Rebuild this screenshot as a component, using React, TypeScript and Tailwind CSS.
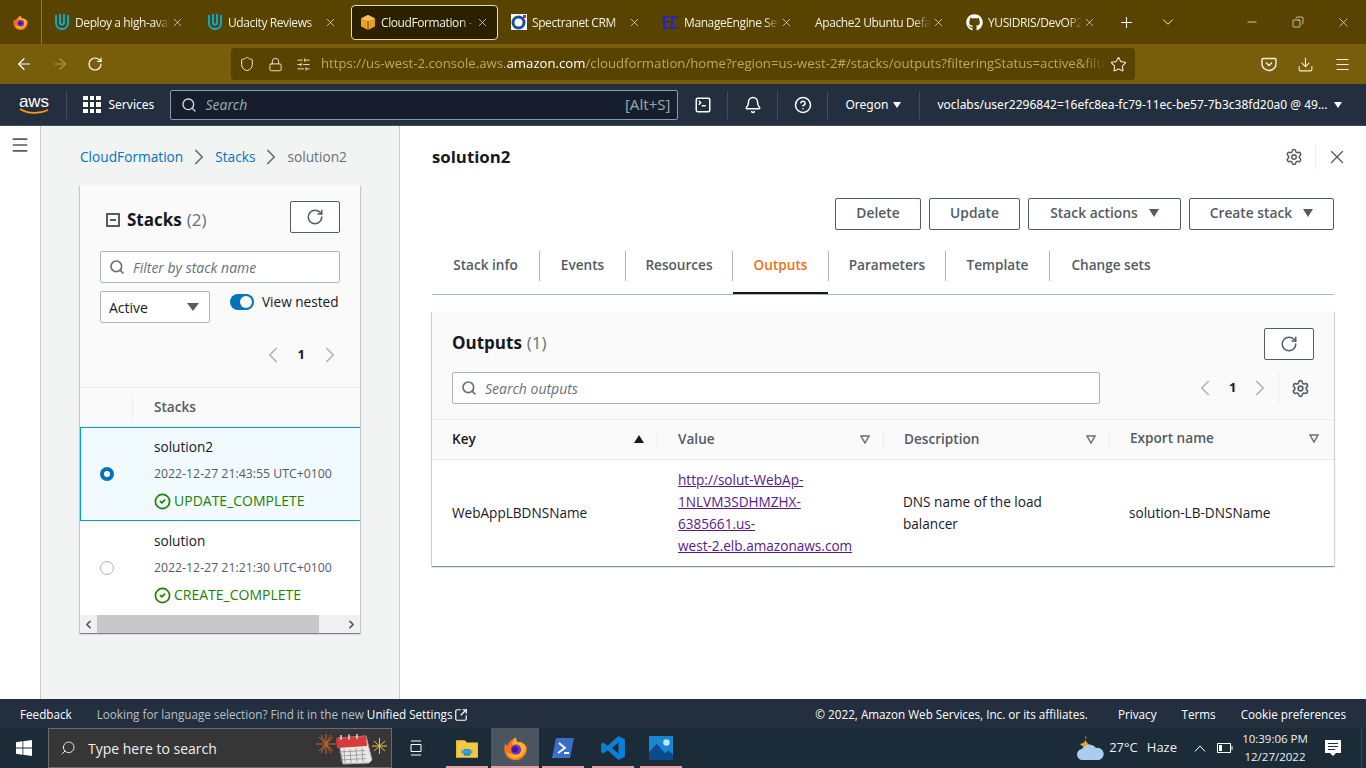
import { RotateCw, Search, Settings, X, ChevronLeft, ChevronRight, ChevronDown, Plus, ArrowLeft, ArrowRight, Shield, Lock, SlidersHorizontal, Star, Download, Menu, Bell, CircleHelp, SquareTerminal, CircleCheck, Minus, SquareArrowOutUpRight, Copy } from "lucide-react";
import { FaGithub } from "react-icons/fa";

function Firefox({ size = 18 }: { size?: number }) {
  return (
    <svg width={size} height={size} viewBox="0 0 24 24">
      <path d="M12 2c1 2 .5 3.5 2 4.500 3-1 7 2 8 5 .5 6-4 11-10 11S2 18 2 12c0-2 .5-3.500 1.500-5 0 1.500.5 2 1 2.500C6 6 9 4 12 2z" fill="#f4701f" />
      <path d="M12 2c1 2 .5 3.500 2 4.500 3-1 6.500 1.500 7.500 4.500-.5 5-4 9-9.500 10C8 21 5 19 4 15c3 3 9 3 11-1 .5-2-1-4-3-4.500-2-.2-3-1-3-2 1-2 2-3.500 3-5.500z" fill="#fbb120" />
      <circle cx="12.500" cy="13" r="4.500" fill="#7b2ccf" />
      <circle cx="11.500" cy="13" r="2.500" fill="#3a1d8a" />
    </svg>
  );
}

function Udacity() {
  return (
    <svg width="16" height="18" viewBox="0 0 16 18" fill="none" stroke="#02b3e4" strokeWidth="1.800">
      <path d="M2 2v8c0 3.500 2.500 6 6 6s6-2.500 6-6V2" />
      <path d="M6 1v9c0 2 4 2 4 0V1" />
    </svg>
  );
}

function Tab({ label, icon, active, space }: { label: string; icon?: React.ReactNode; active?: boolean; space: string }) {
  return (
    <div className={`w-[147px] shrink-0 ${space}`}>
      <div className={`flex items-center h-[35px] ${active ? "bg-[#2b2000] border border-[#e8dcae] rounded-[4px] pl-[8px]" : "pl-[9px]"}`}>
        {icon}
        <span className={`text-[12px] tracking-[-0.4px] pt-[1px] text-[#f3f0e4] whitespace-nowrap overflow-hidden w-0 flex-1 [mask-image:linear-gradient(90deg,#000_85%,transparent)] ${icon ? "ml-[5px]" : ""}`}>{label}</span>
        <X size={13} strokeWidth={1.300} className="text-[#f3f0e4] shrink-0 mr-[8px] ml-[1px]" />
      </div>
    </div>
  );
}

function TabBar() {
  return (
    <div className="h-[44px] bg-[#584300] flex items-center shrink-0">
      <div className="w-[42px] h-[44px] border-r border-[#8a7a40] flex items-center justify-center shrink-0">
        <Firefox size={17} />
      </div>
      <div className="flex items-center pl-[3px]">
        <Tab space="mr-[6px]" label="Deploy a high-availability" icon={<Udacity />} />
        <Tab space="mr-[6px]" label="Udacity Reviews" icon={<Udacity />} />
        <Tab space="mr-[4px]" active label="CloudFormation - Stack" icon={
          <svg width="16" height="17" viewBox="0 0 16 17"><path d="M8 1l7 3.500v8L8 16l-7-3.500v-8z" fill="#e8a020" /><path d="M8 1l7 3.500L8 7 1 4.500z" fill="#f4c060" /><path d="M8 7v9" stroke="#7a5000" strokeWidth="1" /></svg>
        } />
        <Tab space="mr-[5px]" label="Spectranet CRM" icon={
          <svg width="16" height="16" viewBox="0 0 16 16"><rect width="16" height="16" fill="#fff" /><circle cx="7.500" cy="8.500" r="5.500" fill="none" stroke="#1c4f9c" strokeWidth="3" /><rect x="12" y="1" width="3" height="3" fill="#e02020" /></svg>
        } />
        <Tab space="mr-[5px]" label="ManageEngine ServiceDesk" icon={
          <svg width="16" height="15" viewBox="0 0 16 15" fill="none" stroke="#1a1aff" strokeWidth="1.600"><path d="M7 2H1v11h6M1 7h5M15 2H9v11h6M9 2v11" /></svg>
        } />
        <Tab space="mr-[4px]" label="Apache2 Ubuntu Default Page" />
        <Tab space="" label="YUSIDRIS/DevOP2-Project" icon={<FaGithub size={17} className="text-white" />} />
      </div>
      <Plus size={17} strokeWidth={1.500} className="text-white ml-[14px]" />
      <ChevronDown size={18} strokeWidth={1.300} className="text-[#f3f0e4] ml-[24px]" />
      <div className="flex-1" />
      <Minus size={14} strokeWidth={1.200} className="text-white mr-[33px]" />
      <Copy size={12} strokeWidth={1.300} className="text-white mr-[32px] -scale-x-100" />
      <X size={15} strokeWidth={1} className="text-white mr-[15px]" />
    </div>
  );
}

function AddressBar() {
  return (
    <div className="h-[40px] bg-[#785e0a] flex items-center shrink-0">
      <ArrowLeft size={18} strokeWidth={1.600} className="text-white ml-[15px]" />
      <ArrowRight size={18} strokeWidth={1.600} className="text-[#a8965a] ml-[18px]" />
      <RotateCw size={16} strokeWidth={1.800} className="text-white ml-[18px]" />
      <div className="ml-[128px] w-[904px] h-[32px] bg-[#584300] rounded-[4px] flex items-center">
        <Shield size={16} strokeWidth={1.500} className="text-[#f0ead0] ml-[8px]" />
        <Lock size={15} strokeWidth={1.500} className="text-[#f0ead0] ml-[13px]" />
        <SlidersHorizontal size={15} strokeWidth={1.500} className="text-[#f0ead0] ml-[13px]" />
        <div className="ml-[10px] w-[785px] shrink-0 overflow-hidden whitespace-nowrap text-[13.200px] text-[#baa86e] [mask-image:linear-gradient(90deg,#000_97%,transparent)]">
          https://us-west-2.console.aws.<span className="text-white">amazon.com</span>/cloudformation/home?region=us-west-2#/stacks/outputs?filteringStatus=active&amp;filteringText=
        </div>
        <Star size={17} strokeWidth={1.500} className="text-[#f3f0e4] ml-[4px]" />
      </div>
      <div className="flex-1" />
      <svg width="16" height="16" viewBox="0 0 16 16" fill="none" stroke="#f3f0e4" strokeWidth="1.400" className="mr-[20px]"><path d="M2 2.500h12a1 1 0 0 1 1 1V8a7 6.500 0 0 1-14 0V3.500a1 1 0 0 1 1-1z" /><path d="M5 6.500l3 3 3-3" /></svg>
      <Download size={17} strokeWidth={1.500} className="text-[#f3f0e4] mr-[20px]" />
      <Menu size={17} strokeWidth={1.500} className="text-[#f3f0e4] mr-[15px]" />
    </div>
  );
}

function AwsNav() {
  const divider = "w-px h-[28px] bg-[#414d5c] shrink-0";
  return (
    <div className="h-[42px] bg-[#232f3e] flex items-center shrink-0 border-b border-[#414d5c] font-['Noto_Sans',sans-serif]">
      <div className="w-[66px] flex flex-col items-center shrink-0 pl-[2px]">
        <span className="text-[17px] leading-[13px] text-white font-['Liberation_Sans',sans-serif]">aws</span>
        <svg width="30" height="7" viewBox="0 0 30 7" fill="none"><path d="M1 1c8 5 20 5 28 1" stroke="#f90" strokeWidth="1.600" /></svg>
      </div>
      <div className={divider} />
      <div className="grid grid-cols-3 gap-[2px] ml-[16px] shrink-0">
        {Array.from({ length: 9 }).map((_, i) => (
          <div key={i} className="w-[4.500px] h-[4.500px] bg-white" />
        ))}
      </div>
      <span className="text-[12px] text-white ml-[8px] w-[25px]">Services</span>
      <div className="ml-[36px] w-[508px] h-[30px] bg-[#161e2d] border border-[#8d9ba8] rounded-[2px] flex items-center shrink-0">
        <Search size={16} strokeWidth={2} className="text-[#d5dbdb] ml-[10px]" />
        <span className="text-[14px] italic text-[#95a5a6] ml-[9px]">Search</span>
        <span className="text-[15px] text-[#95a5a6] ml-auto mr-[6px]">[Alt+S]</span>
      </div>
      <SquareTerminal size={18} strokeWidth={2} className="text-white ml-[16px]" />
      <div className={`${divider} ml-[15px]`} />
      <Bell size={18} strokeWidth={2} className="text-white ml-[16px]" />
      <div className={`${divider} ml-[15px]`} />
      <CircleHelp size={18} strokeWidth={2} className="text-white ml-[16px]" />
      <div className={`${divider} ml-[15px]`} />
      <span className="text-[12px] text-white ml-[18px]">Oregon</span>
      <span className="w-0 h-0 border-l-[4px] border-r-[4px] border-t-[6px] border-l-transparent border-r-transparent border-t-white ml-[5px]" />
      <div className={`${divider} ml-[18px]`} />
      <span className="text-[12px] text-white ml-[17px] whitespace-nowrap">voclabs/user2296842=16efc8ea-fc79-11ec-be57-7b3c38fd20a0 @ 49...</span>
      <span className="w-0 h-0 border-l-[4px] border-r-[4px] border-t-[6px] border-l-transparent border-r-transparent border-t-white ml-[6px]" />
    </div>
  );
}

function StackRow({ name, time, status, selected }: { name: string; time: string; status: string; selected?: boolean }) {
  return (
    <div className={`flex h-[94px] ${selected ? "bg-[#f1faff] border border-[#00a1c9] border-r-0" : "bg-white pl-px"}`}>
      <div className="w-[52px] flex items-center justify-center shrink-0">
        {selected ? (
          <div className="w-[14px] h-[14px] rounded-full border-[4px] border-[#0073bb] bg-white" />
        ) : (
          <div className="w-[14px] h-[14px] rounded-full border border-[#aab7b8] bg-white" />
        )}
      </div>
      <div className={`pl-[21px] ${selected ? "pt-[9px]" : "pt-[10px]"}`}>
        <div className="text-[13.600px] leading-[20px] text-[#16191f]">{name}</div>
        <div className="text-[12.300px] leading-[18px] text-[#545b64] mt-[8px] whitespace-nowrap">{time}</div>
        <div className="flex items-center text-[14px] leading-[20px] text-[#1d8102] mt-[8px]">
          <CircleCheck size={17} strokeWidth={2.400} className="mr-[3px]" />
          {status}
        </div>
      </div>
    </div>
  );
}

function StacksPanel() {
  return (
    <div className="w-[280px] h-[448px] mt-[20px] ml-[39px] bg-[#fafafa] shadow-[0_1px_1px_0_rgba(0,28,36,0.3),1px_1px_1px_0_rgba(0,28,36,0.15),-1px_1px_1px_0_rgba(0,28,36,0.15)] flex flex-col overflow-hidden">
      <div className="h-[202px] relative shrink-0 px-[20px]">
        <div className="flex items-center justify-between pt-[16px]">
          <div className="flex items-center pl-[6px] pt-[6px]">
            <div className="w-[14px] h-[14px] border-2 border-[#545b64] flex items-center justify-center mr-[7px]">
              <div className="w-[6px] h-[2px] bg-[#545b64]" />
            </div>
            <span className="text-[17px] leading-[24px] font-bold text-[#16191f]">Stacks</span>
            <span className="text-[17px] leading-[24px] text-[#687078] ml-[5px]">(2)</span>
          </div>
          <div className="w-[50px] h-[32px] bg-white border border-[#545b64] rounded-[2px] flex items-center justify-center">
            <RotateCw size={18} strokeWidth={2} className="text-[#545b64]" />
          </div>
        </div>
        <div className="h-[32px] mt-[18px] bg-white border border-[#aab7b8] rounded-[2px] flex items-center">
          <Search size={16} strokeWidth={2.500} className="text-[#687078] ml-[8px]" />
          <span className="text-[14px] italic text-[#687078] ml-[8px]">Filter by stack name</span>
        </div>
        <div className="flex mt-[8px]">
          <div className="w-[110px] h-[32px] bg-white border border-[#aab7b8] rounded-[2px] flex items-center justify-between px-[8px]">
            <span className="text-[14px] text-[#16191f]">Active</span>
            <span className="w-0 h-0 border-l-[6px] border-r-[6px] border-t-[8px] border-l-transparent border-r-transparent border-t-[#545b64] mr-[2px]" />
          </div>
          <div className="flex items-start pt-[1px] ml-[20px]">
            <div className="w-[24px] h-[16px] mt-[2px] rounded-full bg-[#0073bb] relative">
              <div className="absolute right-[2px] top-[2px] w-[12px] h-[12px] rounded-full bg-white" />
            </div>
            <span className="text-[13.600px] leading-[20px] text-[#16191f] ml-[8px] whitespace-nowrap">View nested</span>
          </div>
        </div>
        <div className="flex items-center justify-end mt-[19px] -mr-[3px]">
          <ChevronLeft size={26} strokeWidth={1.600} className="text-[#aab7b8]" />
          <span className="text-[13px] font-bold text-[#16191f] mx-[12px]">1</span>
          <ChevronRight size={26} strokeWidth={1.600} className="text-[#aab7b8]" />
        </div>
      </div>
      <div className="h-[40px] border-t border-[#eaeded] border-b flex items-center shrink-0">
        <div className="w-[53px] h-[20px] border-r border-[#eaeded] shrink-0" />
        <span className="text-[13.600px] font-semibold text-[#545b64] ml-[21px]">Stacks</span>
      </div>
      <StackRow selected name="solution2" time="2022-12-27 21:43:55 UTC+0100" status="UPDATE_COMPLETE" />
      <StackRow name="solution" time="2022-12-27 21:21:30 UTC+0100" status="CREATE_COMPLETE" />
      <div className="h-[18px] bg-[#f0f0f0] flex items-center mt-auto shrink-0">
        <ChevronLeft size={13} strokeWidth={3} className="text-[#505050] mx-[2px]" />
        <div className="w-[222px] h-[18px] bg-[#c8c8c8]" />
        <ChevronRight size={13} strokeWidth={3} className="text-[#505050] ml-auto mr-[2px]" />
      </div>
    </div>
  );
}

function ActionButton({ label, caret, w }: { label: string; caret?: boolean; w: string }) {
  return (
    <div className={`h-[32px] ${w} bg-white border border-[#545b64] rounded-[2px] flex items-center justify-center pb-[2px] text-[13.800px] font-semibold text-[#545b64]`}>
      {label}
      {caret && <span className="w-0 h-0 border-l-[5px] border-r-[5px] border-t-[8px] border-l-transparent border-r-transparent border-t-[#545b64] ml-[11px]" />}
    </div>
  );
}

function TabItem({ label, active, w, last }: { label: string; active?: boolean; w: string; last?: boolean }) {
  return (
    <div className={`relative h-[30px] ${w} flex items-center justify-center pb-[2px] text-[13.600px] font-semibold ${active ? "text-[#ec7211]" : "text-[#545b64]"} ${last ? "" : "border-r border-[#aab7b8]"}`}>
      {label}
      {active && <div className="absolute left-0 right-0 top-[41px] h-[2px] bg-[#16191f]" />}
    </div>
  );
}

function HeaderCell({ label, w, sorted }: { label: string; w: string; sorted?: boolean }) {
  return (
    <div className={`${w} h-[40px] flex items-center relative pl-[20px] pb-[2px] shrink-0 text-[13.600px] font-semibold ${sorted ? "text-[#16191f]" : "text-[#545b64]"}`}>
      {label}
      {sorted ? (
        <span className="absolute right-[14px] w-0 h-0 border-l-[5px] border-r-[5px] border-b-[8px] border-l-transparent border-r-transparent border-b-[#16191f]" />
      ) : (
        <svg width="10" height="9" viewBox="0 0 10 9" className="absolute right-[14px]" fill="none" stroke="#687078" strokeWidth="1.500"><path d="M1 1h8L5 8z" /></svg>
      )}
      <div className="absolute right-0 top-[10px] h-[20px] w-px bg-[#eaeded]" />
    </div>
  );
}

function OutputsPanel() {
  return (
    <div className="mt-[16px] h-[255px] bg-white shadow-[0_1px_1px_0_rgba(0,28,36,0.3),1px_1px_1px_0_rgba(0,28,36,0.15),-1px_1px_1px_0_rgba(0,28,36,0.15)] flex flex-col">
      <div className="h-[109px] bg-[#fafafa] px-[20px] shrink-0 border-b border-[#eaeded]">
        <div className="flex items-start justify-between pt-[17px] h-[61px]">
          <div className="flex items-center pt-[3px]">
            <span className="text-[17px] leading-[24px] font-bold text-[#16191f]">Outputs</span>
            <span className="text-[17px] leading-[24px] text-[#687078] ml-[5px]">(1)</span>
          </div>
          <div className="w-[50px] h-[32px] bg-white border border-[#545b64] rounded-[2px] flex items-center justify-center">
            <RotateCw size={18} strokeWidth={2} className="text-[#545b64]" />
          </div>
        </div>
        <div className="flex items-center">
          <div className="w-[648px] h-[32px] bg-white border border-[#aab7b8] rounded-[2px] flex items-center">
            <Search size={16} strokeWidth={2.500} className="text-[#687078] ml-[8px]" />
            <span className="text-[14px] italic text-[#687078] ml-[8px]">Search outputs</span>
          </div>
          <ChevronLeft size={26} strokeWidth={1.600} className="text-[#aab7b8] ml-[92px]" />
          <span className="text-[13px] font-bold text-[#16191f] mx-[11px]">1</span>
          <ChevronRight size={26} strokeWidth={1.600} className="text-[#aab7b8]" />
          <div className="w-px h-[32px] bg-[#eaeded] ml-[5px]" />
          <Settings size={19} strokeWidth={2} className="text-[#545b64] ml-[12px]" />
        </div>
      </div>
      <div className="flex h-[40px] bg-[#fafafa] border-b border-[#eaeded] shrink-0">
        <HeaderCell label="Key" w="w-[226px]" sorted />
        <HeaderCell label="Value" w="w-[226px]" />
        <HeaderCell label="Description" w="w-[226px]" />
        <div className="flex-1 relative flex items-center pl-[20px] pb-[2px] text-[13.600px] font-semibold text-[#545b64]">
          Export name
          <svg width="10" height="9" viewBox="0 0 10 9" className="absolute right-[15px]" fill="none" stroke="#687078" strokeWidth="1.500"><path d="M1 1h8L5 8z" /></svg>
        </div>
      </div>
      <div className="flex flex-1 items-center text-[13.600px] leading-[22px] text-[#16191f]">
        <div className="w-[226px] pl-[20px] shrink-0">WebAppLBDNSName</div>
        <div className="w-[226px] pl-[20px] pr-[20px] shrink-0 text-[#551a8b] underline">
          <div>http://solut-WebAp-</div>
          <div>1NLVM3SDHMZHX-</div>
          <div>6385661.us-</div>
          <div>west-2.elb.amazonaws.com</div>
        </div>
        <div className="w-[226px] pl-[19px] pr-[20px] shrink-0">DNS name of the load<br />balancer</div>
        <div className="pl-[19px] whitespace-nowrap">solution-LB-DNSName</div>
      </div>
    </div>
  );
}

function Detail() {
  return (
    <div className="flex-1 bg-white pl-[32px] pr-[32px] min-w-0">
      <div className="flex items-center justify-between h-[62px]">
        <span className="text-[16.800px] font-bold text-[#16191f]">solution2</span>
        <div className="flex items-center -mr-[14px]">
          <Settings size={18} strokeWidth={2} className="text-[#545b64]" />
          <div className="w-px h-[24px] bg-[#eaeded] ml-[12px]" />
          <X size={22} strokeWidth={1.500} className="text-[#545b64] ml-[10px]" />
        </div>
      </div>
      <div className="flex justify-end gap-[8px] mt-[10px]">
        <ActionButton label="Delete" w="w-[86px]" />
        <ActionButton label="Update" w="w-[91px]" />
        <ActionButton label="Stack actions" caret w="w-[153px]" />
        <ActionButton label="Create stack" caret w="w-[145px]" />
      </div>
      <div className="flex items-start h-[65px] pt-[21px] border-b border-[#aab7b8]">
        <TabItem label="Stack info" w="w-[108px]" />
        <TabItem label="Events" w="w-[86px]" />
        <TabItem label="Resources" w="w-[107px]" />
        <TabItem label="Outputs" active w="w-[96px]" />
        <TabItem label="Parameters" w="w-[117px]" />
        <TabItem label="Template" w="w-[104px]" />
        <TabItem label="Change sets" w="w-[122px]" last />
      </div>
      <OutputsPanel />
    </div>
  );
}

function Footer() {
  return (
    <div className="h-[29px] bg-[#232f3e] flex items-center pt-[2px] shrink-0 text-[11.700px] whitespace-nowrap">
      <span className="text-white ml-[20px]">Feedback</span>
      <span className="text-[#b8c0c8] ml-[25px]">Looking for language selection? Find it in the new</span>
      <span className="text-white ml-[3px]">Unified Settings</span>
      <SquareArrowOutUpRight size={14} strokeWidth={2} className="text-white ml-[2px]" />
      <span className="text-white ml-auto">© 2022, Amazon Web Services, Inc. or its affiliates.</span>
      <span className="text-white ml-[30px]">Privacy</span>
      <span className="text-white ml-[25px]">Terms</span>
      <span className="text-white ml-[25px] mr-[20px]">Cookie preferences</span>
    </div>
  );
}

function TaskIcon({ children, active }: { children: React.ReactNode; active?: boolean }) {
  return (
    <div className={`w-[48px] h-[40px] flex items-center justify-center relative shrink-0 ${active ? "bg-[#4a5560]" : ""}`}>
      {children}
      <div className={`absolute bottom-0 h-[2px] bg-[#e8a0a8] ${active ? "left-0 right-0" : "left-[3px] right-[3px]"}`} />
    </div>
  );
}

function Taskbar() {
  return (
    <div className="h-[40px] bg-[#1c2b38] flex items-center shrink-0 text-white relative">
      <div className="w-[48px] flex justify-center shrink-0">
        <svg width="16" height="16" viewBox="0 0 16 16" fill="#fff"><path d="M0 2.300l6.500-1v6.300H0zM7.300 1.200L16 0v7.600H7.300zM0 8.400h6.500v6.300l-6.500-1zM7.300 8.400H16V16l-8.700-1.200z" /></svg>
      </div>
      <div className="w-[344px] h-[40px] bg-[#363636] border border-[#6b6b6b] flex items-center shrink-0 relative">
        <Search size={16} strokeWidth={1.300} className="text-white ml-[11px] -scale-x-100" />
        <span className="text-[14px] text-[#f0f0f0] ml-[12px]">Type here to search</span>
        <svg width="72" height="34" viewBox="0 0 72 34" className="absolute right-[3px] top-[2px]">
          <g stroke="#c8642a" strokeWidth="1"><path d="M0 13h20M10 3v20M3 6l14 14M17 6L3 20M5 4l10 18M15 4L5 22" /></g>
          <g stroke="#f0c040" strokeWidth="1"><path d="M56 15h15M63.500 7v16M58 10l11 10M69 10l-11 10" /></g>
          <path d="M22 7l28-2 6 24-3 3-26 1z" fill="#e8e8e8" stroke="#aaa" />
          <path d="M20 7l30-2 1 10-30 2z" fill="#d83a3a" />
          <path d="M25 4v5M33 3.500v5M41 3v5" stroke="#ddd" strokeWidth="1.500" />
          <path d="M23 21l26-1.500M24 25l26-1.500M24 29l26-1.500M28 18l1 14M34 18l1 14M40 17l1 14M46 17l1 14" stroke="#888" strokeWidth="0.700" />
        </svg>
      </div>
      <div className="w-[50px] flex justify-center shrink-0 ml-[1px]">
        <svg width="16" height="16" viewBox="0 0 16 16" fill="none" stroke="#fff" strokeWidth="1"><path d="M1 1h10M1 15h10M1 4.500h10v7H1zM14 4.500v.1M14 8v.1M14 11.500v.1" /></svg>
      </div>
      <TaskIcon>
        <svg width="24" height="22" viewBox="0 0 22 20"><path d="M1 3h8l2 2h10v14H1z" fill="#f5c842" /><rect x="8" y="11" width="6" height="6" fill="#1e88c8" /><rect x="6" y="12" width="10" height="3" fill="#3aa0e0" /></svg>
      </TaskIcon>
      <TaskIcon active><Firefox size={27} /></TaskIcon>
      <TaskIcon>
        <svg width="24" height="22" viewBox="0 0 24 22"><path d="M5 1h18l-4 20H1z" fill="#3a6fc9" /><path d="M8 6l6 5-7 5M13 16h5" stroke="#fff" strokeWidth="1.800" fill="none" /></svg>
      </TaskIcon>
      <div className="ml-[2px]">
        <TaskIcon>
          <svg width="26" height="26" viewBox="0 0 24 24" fill="#0a7fd4"><path d="M17 1l6 3v16l-6 3-10-9-4 3-2-1V8l2-1 4 3zM17 7l-6 5 6 5z" /></svg>
        </TaskIcon>
      </div>
      <TaskIcon>
        <svg width="24" height="24" viewBox="0 0 22 22"><rect width="22" height="22" fill="#1687d0" /><circle cx="16" cy="6" r="3" fill="#bfe6ff" /><path d="M0 22V15l7-8 8 9 3-3 4 4v5z" fill="#0b4a8c" /></svg>
      </TaskIcon>
      <div className="flex-1" />
      <svg width="27" height="28" viewBox="0 0 27 28" className="mr-[5px]">
        <path d="M9 1a7 7 0 0 0 5 10 7 7 0 0 1-11-1 7 7 0 0 0 6-9z" fill="#f0a020" />
        <path d="M6 26a5.500 5.500 0 0 1-1-11 8 7 0 0 1 14-1 6 6 0 0 1 3 12z" fill="#a8cdf0" />
      </svg>
      <span className="text-[13px] text-[#f0f0f0]">27°C</span>
      <span className="text-[13px] text-[#f0f0f0] ml-[9px]">Haze</span>
      <svg width="12" height="7" viewBox="0 0 12 7" fill="none" stroke="#fff" strokeWidth="1" className="ml-[17px]"><path d="M1 6.500l5-5.500 5 5.500" /></svg>
      <svg width="16" height="10" viewBox="0 0 16 10" fill="none" stroke="#fff" strokeWidth="1" className="ml-[11px]"><rect x="0.500" y="0.500" width="13" height="9" /><rect x="2" y="2" width="3" height="6" fill="#fff" stroke="none" /><path d="M15 3v4" /></svg>
      <div className="w-[70px] ml-[7px] text-center text-[11.500px] leading-[18px] text-[#f0f0f0]">
        <div className="whitespace-nowrap">10:39:06 PM</div>
        <div>12/27/2022</div>
      </div>
      <svg width="16" height="17" viewBox="0 0 16 17" className="ml-[15px] mr-[25px]"><path d="M0 0h16v13h-5l-3 3-3-3H0z" fill="#fff" /><path d="M3 3.500h10M3 6.500h10M3 9.500h7" stroke="#1c2b38" /></svg>
      <div className="w-px h-[40px] bg-[#3c4a58] absolute right-[4px] top-0" />
    </div>
  );
}

export default function App() {
  return (
    <div className="w-[1366px] h-[768px] overflow-hidden flex flex-col font-['Open_Sans','Noto_Sans',sans-serif]">
      <TabBar />
      <AddressBar />
      <AwsNav />
      <div className="flex-1 flex min-h-0">
        <div className="w-[41px] bg-white border-r border-[#c6cccc] flex justify-center pt-[10px] shrink-0">
          <Menu size={20} strokeWidth={2} className="text-[#545b64] -mt-[1px]" />
        </div>
        <div className="w-[359px] bg-[#f2f3f3] border-r border-[#c6cccc] shrink-0">
          <div className="flex items-center h-[16px] mt-[23px] ml-[39px] text-[13.700px]">
            <span className="text-[#0073bb]">CloudFormation</span>
            <ChevronRight size={26} strokeWidth={1.600} className="text-[#687078] mx-[3px]" />
            <span className="text-[#0073bb]">Stacks</span>
            <ChevronRight size={26} strokeWidth={1.600} className="text-[#687078] mx-[3px]" />
            <span className="text-[#687078]">solution2</span>
          </div>
          <StacksPanel />
        </div>
        <Detail />
      </div>
      <Footer />
      <Taskbar />
    </div>
  );
}
